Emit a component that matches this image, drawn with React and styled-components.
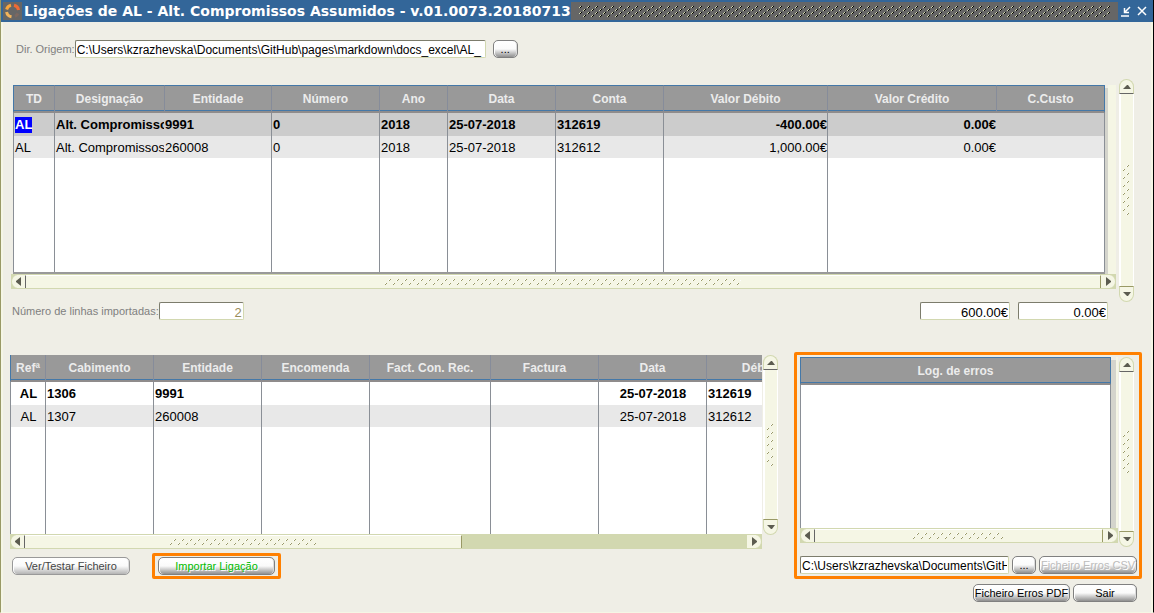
import React from "react";
import styled, { createGlobalStyle, css } from "styled-components";

const color = {
  page: "#efeee6",
  cream: "#f5f6e5",
  olive: "#d2d8b0",
  oliveDark: "#999966",
  title: "#336699",
  header: "#999999",
  line: "#8a8f96",
  blue: "#4478a8",
  orange: "#ff8000",
};

const Global = createGlobalStyle`
  * { box-sizing: border-box; }
  body {
    margin: 0;
    background: ${color.page};
    font-family: "Liberation Sans", Arial, sans-serif;
    font-size: 13px;
    color: #000;
  }
  button, input { font-family: inherit; margin: 0; }
`;

const Window = styled.div`
  display: flex;
  flex-direction: column;
  min-height: 100vh;
  border-left: 1px solid ${color.oliveDark};
  border-right: 1px solid #000;
  border-bottom: 1px solid ${color.cream};
  background: ${color.page};
`;

const TitleBar = styled.header`
  display: flex;
  align-items: center;
  height: 22px;
  padding: 0 3px 0 2px;
  background: ${color.title};
`;

const Title = styled.h1`
  margin: 0 0 0 2px;
  font: bold 14px/20px "DejaVu Sans", Verdana, sans-serif;
  color: #fff;
  white-space: nowrap;
`;

const TitleGrip = styled.div`
  flex: 1;
  height: 18px;
  padding: 4px 8px;
  background: #666;
  svg { display: block; }
`;

const TitleButton = styled.button`
  width: 16px;
  height: 18px;
  padding: 0;
  border: 0;
  background: transparent;
  svg { display: block; margin: 0 auto; }
`;

const Main = styled.main`
  flex: 1;
  border-left: 2px solid ${color.cream};
  border-right: 2px solid ${color.cream};
  padding: 18px 9px 8px 7px;
`;

const Label = styled.label`
  font-size: 11px;
  line-height: 14px;
  color: #808080;
  white-space: nowrap;
`;

const Field = styled.input`
  width: ${(p) => p.$w}px;
  flex: ${(p) => (p.$grow ? "1" : "none")};
  min-width: 0;
  height: 18px;
  padding: 2px 1px 0;
  border: 1px solid;
  border-color: #7c7c6c ${color.olive} ${color.olive} #7c7c6c;
  border-radius: 2px;
  background: #fff;
  font-size: ${(p) => (p.$path ? 12 : 13)}px;
  color: ${(p) => (p.$muted ? "#998c59" : "#000")};
  text-align: ${(p) => (p.$right ? "right" : "left")};
  outline: 0;
`;

const PushButton = styled.button`
  width: ${(p) => p.$w}px;
  flex: none;
  height: 18px;
  padding: 0;
  border: 1px solid #808080;
  border-radius: 5px;
  background: linear-gradient(#fff 0, #fafafa 50%, #cfcfcf 70%, #8f8f8f 100%);
  box-shadow: inset 1px 0 #fff, inset -1px 0 #ddd;
  font-size: 11px;
  line-height: 16px;
  white-space: nowrap;
  color: ${(p) => p.$color || "#000"};
  ${(p) =>
    p.$soft &&
    css`
      border-color: #999;
      background: linear-gradient(#fff 0, #fafafa 50%, #dedede 70%, #b4b4b4 100%);
    `}
  ${(p) =>
    p.$shade &&
    css`
      text-shadow: 1px 1px #fff;
    `}
`;

const SourceRow = styled.div`
  display: flex;
  align-items: center;
  margin-left: 6px;
  ${Field} { margin-right: 7px; }
`;

const Section = styled.section`
  display: flex;
  margin: 21px 0 0 1px;
  padding-right: 8px;
`;

const GridBlock = styled.div`
  flex: 1;
  min-width: 0;
  padding: ${(p) => p.$pad || 0};
`;

const GridFrame = styled.div`
  display: flex;
  overflow: hidden;
  padding-left: ${(p) => p.$inset || 0}px;
`;

const Shade = styled.div`
  width: ${(p) => p.$w}px;
  flex: none;
  margin-top: 3px;
  background: #d4d4cc;
`;

const Gutter = styled.div`
  width: ${(p) => p.$w}px;
  flex: none;
  background: ${color.cream};
`;

const Table = styled.table`
  width: 100%;
  min-width: ${(p) => p.$min || 0}px;
  table-layout: fixed;
  border-collapse: separate;
  border-spacing: 0;
  background: #fff;
  border-bottom: ${(p) => (p.$foot ? `2px solid ${color.header}` : "0")};
`;

const Th = styled.th`
  height: ${(p) => p.$h || 28}px;
  padding: 0;
  overflow: hidden;
  border-left: 1px solid #868c9a;
  border-top: ${(p) => (p.$open ? "0" : `1px solid ${color.blue}`)};
  border-bottom: 2px solid #8f8c8c;
  background: ${color.header};
  box-shadow: inset 0 -1px ${color.blue};
  font-size: 12px;
  line-height: 14px;
  color: #ececec;
  white-space: nowrap;
  &:first-child { border-left-color: ${color.blue}; }
  &:last-child { border-right: 1px solid ${color.blue}; }
`;

const Row = styled.tr`
  background: ${(p) => p.$bg};
  font-weight: ${(p) => (p.$bold ? "bold" : "normal")};
`;

const Td = styled.td`
  height: ${(p) => p.$h}px;
  padding: ${(p) => (p.$low ? 2 : 0)}px 0 0 ${(p) => (p.$align === "right" ? 0 : 1)}px;
  overflow: hidden;
  border-left: ${(p) => (p.$open ? "0" : `1px solid ${color.line}`)};
  line-height: 16px;
  white-space: nowrap;
  text-align: ${(p) => p.$align || "left"};
  &:last-child { border-right: 1px solid ${color.line}; }
`;

const Marked = styled.span`
  display: inline-block;
  background: #0000ff;
  color: #fff;
`;

const HBar = styled.div`
  display: flex;
  height: 15px;
  border: solid ${color.olive};
  border-width: 1px 0;
  background: ${color.olive};
`;

const VBar = styled.div`
  display: flex;
  flex-direction: column;
  flex: none;
  width: 15px;
  margin-left: ${(p) => p.$gap}px;
`;

const HThumb = styled.div`
  display: flex;
  align-items: center;
  justify-content: center;
  flex: ${(p) => (p.$size ? `0 0 ${p.$size}` : "1")};
  background: ${color.cream};
  border-top: 1px solid #fff;
  border-left: 1px solid #666;
  border-right: 1px solid ${color.oliveDark};
`;

const VThumb = styled.div`
  display: flex;
  align-items: center;
  justify-content: center;
  flex: 1;
  background: ${color.cream};
  border: solid #fff;
  border-width: 0 1px 0 2px;
`;

const ScrollButton = styled.button`
  flex: none;
  display: flex;
  align-items: center;
  justify-content: center;
  padding: 0;
  background: ${color.cream};
  border: 1px solid ${color.olive};
  ${(p) => p.$dir === "left" && css`width: 14px; border-width: 0 0 0 1px; border-radius: 7px 0 0 7px;`}
  ${(p) => p.$dir === "right" && css`width: 15px; border-width: 0 1px 0 0; border-radius: 0 7px 7px 0;`}
  ${(p) => p.$dir === "up" && css`height: 15px; border-radius: 8px 8px 0 0; border-bottom-color: #666;`}
  ${(p) => p.$dir === "down" && css`height: 16px; border-radius: 0 0 8px 8px; border-top-color: ${color.oliveDark};`}
`;

const Track = styled.div`
  flex: 1;
`;

const arrows = {
  left: "M5 0v9L0 5V4z",
  right: "M0 0v9l5-4V4z",
  up: "M0 5h8L5 1H4z",
  down: "M0 1h8L5 5H4z",
};

function Arrow({ dir }) {
  const tall = dir === "left" || dir === "right";
  return (
    <svg width={tall ? 5 : 8} height={tall ? 9 : 6} aria-hidden="true">
      <path d={arrows[dir]} fill="#5c5c50" />
    </svg>
  );
}

function Grip({ id, w, h }) {
  return (
    <svg width={w} height={h} shapeRendering="crispEdges" aria-hidden="true">
      <defs>
        <pattern id={id} width="8" height="8" patternUnits="userSpaceOnUse">
          <path d="M5 0h1v1h-1zM4 1h1v1h-1zM1 4h1v1h-1zM0 5h1v1h-1z" fill="#999966" />
          <path d="M4 0h1v1h-1zM3 1h1v1h-1zM0 4h1v1h-1z" fill="#fff" />
        </pattern>
      </defs>
      <rect width={w} height={h} fill={`url(#${id})`} />
    </svg>
  );
}

function HScroll({ id, grip, size }) {
  return (
    <HBar>
      <ScrollButton $dir="left" type="button" aria-label="Esquerda"><Arrow dir="left" /></ScrollButton>
      <HThumb $size={size}><Grip id={id} w={grip} h={6} /></HThumb>
      {size && <Track />}
      <ScrollButton $dir="right" type="button" aria-label="Direita"><Arrow dir="right" /></ScrollButton>
    </HBar>
  );
}

function VScroll({ id, grip, gap }) {
  return (
    <VBar $gap={gap}>
      <ScrollButton $dir="up" type="button" aria-label="Acima"><Arrow dir="up" /></ScrollButton>
      <VThumb><Grip id={id} w={8} h={grip} /></VThumb>
      <ScrollButton $dir="down" type="button" aria-label="Abaixo"><Arrow dir="down" /></ScrollButton>
    </VBar>
  );
}

const TotalsRow = styled.div`
  display: flex;
  align-items: center;
  padding: 0 34px 0 2px;
`;

const Totals = styled.div`
  display: flex;
  gap: 8px;
  margin-left: auto;
`;

const Lower = styled.div`
  display: flex;
  align-items: flex-start;
  gap: 16px;
  margin-top: 32px;
`;

const Links = styled.section`
  flex: 1;
  min-width: 0;
  padding-top: 3px;
`;

const LinksGrid = styled.div`
  display: flex;
  align-items: flex-start;
  ${VBar} { height: 180px; }
`;

const Actions = styled.div`
  display: flex;
  align-items: center;
  gap: 22px;
  margin: 4px 0 0 2px;
`;

const Highlight = styled.div`
  display: flex;
  padding: 1px 3px;
  border: 3px solid ${color.orange};
  border-radius: 2px;
`;

const LogPanel = styled.section`
  flex: none;
  width: 348px;
  padding: 2px 2px 2px 3px;
  border: 3px solid ${color.orange};
  border-radius: 2px;
`;

const LogGrid = styled.div`
  display: flex;
  align-items: flex-start;
  padding-right: 3px;
  ${VBar} { height: 190px; }
`;

const LogFile = styled.div`
  display: flex;
  gap: 3px;
  margin-top: 9px;
`;

const Footer = styled.footer`
  display: flex;
  justify-content: flex-end;
  gap: 3px;
  margin: 5px 5px 0 0;
`;

const mainCols = [
  ["TD", 41],
  ["Designação", 110],
  ["Entidade", 107, "left", true],
  ["Número", 108],
  ["Ano", 68],
  ["Data", 108],
  ["Conta", 108],
  ["Valor Débito", 164, "right"],
  ["Valor Crédito", 169, "right"],
  ["C.Custo", 109, "left", true],
];

const mainRows = [
  ["AL", "Alt. Compromissos Assumidos", "9991", "0", "2018", "25-07-2018", "312619", "-400.00€", "0.00€", ""],
  ["AL", "Alt. Compromissos Assumidos", "260008", "0", "2018", "25-07-2018", "312612", "1,000.00€", "0.00€", ""],
];

const linkCols = [
  ["Refª", 35, "center"],
  ["Cabimento", 108],
  ["Entidade", 108],
  ["Encomenda", 108],
  ["Fact. Con. Rec.", 121],
  ["Factura", 108],
  ["Data", 108, "center"],
  ["Débito", 109],
];

const linkRows = [
  ["AL", "1306", "9991", "", "", "", "25-07-2018", "312619"],
  ["AL", "1307", "260008", "", "", "", "25-07-2018", "312612"],
];

function DataTable({ cols, rows, firstBg, mark, rest, min, foot, openTop, headH }) {
  return (
    <Table $min={min} $foot={foot}>
      <colgroup>
        {cols.map(([name, w]) => <col key={name} style={w ? { width: w } : undefined} />)}
      </colgroup>
      <thead>
        <tr>{cols.map(([name]) => <Th key={name} scope="col" $open={openTop} $h={headH}>{name}</Th>)}</tr>
      </thead>
      <tbody>
        {rows.map((row, r) => (
          <Row key={r} $bold={r === 0} $bg={r === 0 ? firstBg : "#e8e8e8"}>
            {row.map((text, c) => (
              <Td key={c} $h={r === 0 ? 23 : 22} $low={r > 0} $align={cols[c][2]} $open={cols[c][3]}>
                {mark && r === 0 && c === 0 ? <Marked>{text}</Marked> : text}
              </Td>
            ))}
          </Row>
        ))}
        <Row>
          {cols.map(([name, , , open]) => <Td key={name} $h={rest} $open={open} />)}
        </Row>
      </tbody>
    </Table>
  );
}

function Logo() {
  return (
    <svg width="19" height="18" viewBox="0 0 19 18" aria-hidden="true">
      <rect width="19" height="18" fill="#666" />
      <g fill="none" strokeWidth="3">
        <path d="M8 3.3A6 6 0 0 0 3.6 7.5" stroke="#f7a63c" />
        <path d="M11 3.3A6 6 0 0 1 15.6 8" stroke="#ef6a35" />
        <path d="M3.6 10A6 6 0 0 0 8.5 14.8" stroke="#f2b45c" />
        <path d="M15 11.5A6 6 0 0 1 12 14.3" stroke="#7c6860" />
      </g>
    </svg>
  );
}

export default function App() {
  return (
    <Window>
      <Global />
      <TitleBar>
        <Logo />
        <Title>Ligações de AL - Alt. Compromissos Assumidos - v.01.0073.20180713</Title>
        <TitleGrip>
          <svg width="100%" height="11" shapeRendering="crispEdges" aria-hidden="true">
            <defs>
              <pattern id="title-grip" width="8" height="6" patternUnits="userSpaceOnUse">
                <path d="M1 1h1v1h-1zM2 0h1v1h-1zM5 4h1v1h-1zM6 3h1v1h-1z" fill="#000" />
                <path d="M1 0h1v1h-1zM0 1h1v1h-1zM5 3h1v1h-1zM4 4h1v1h-1z" fill="#d2d8b0" />
              </pattern>
            </defs>
            <rect width="100%" height="11" fill="url(#title-grip)" />
          </svg>
        </TitleGrip>
        <TitleButton type="button" aria-label="Minimizar">
          <svg width="10" height="11">
            <path d="M9 1L4 6M3.5 2v4.500H8M0 10h8" fill="none" stroke="#fff" strokeWidth="1.500" />
          </svg>
        </TitleButton>
        <TitleButton type="button" aria-label="Fechar">
          <svg width="10" height="10">
            <path d="M1 1l8 8M9 1L1 9" fill="none" stroke="#fff" strokeWidth="1.500" />
          </svg>
        </TitleButton>
      </TitleBar>

      <Main>
        <SourceRow>
          <Label htmlFor="origem">Dir. Origem:</Label>
          <Field id="origem" $w={411} $path defaultValue="C:\Users\kzrazhevska\Documents\GitHub\pages\markdown\docs_excel\AL_" />
          <PushButton type="button" $w={25}>...</PushButton>
        </SourceRow>

        <Section>
          <GridBlock $pad="6px 0 13px">
            <GridFrame $inset={2}>
              <DataTable cols={mainCols} rows={mainRows} firstBg="#cccccc" mark foot rest={114} />
              <Shade $w={3} />
              <Gutter $w={8} />
            </GridFrame>
            <HScroll id="grip-main-h" grip={356} />
          </GridBlock>
          <VScroll id="grip-main-v" grip={50} gap={3} />
        </Section>

        <TotalsRow>
          <Label htmlFor="linhas">Número de linhas importadas:</Label>
          <Field id="linhas" $w={85} $right $muted defaultValue="2" />
          <Totals>
            <Field aria-label="Total débito" $w={90} $right defaultValue="600.00€" />
            <Field aria-label="Total crédito" $w={90} $right defaultValue="0.00€" />
          </Totals>
        </TotalsRow>

        <Lower>
          <Links>
            <LinksGrid>
              <GridBlock>
                <GridFrame>
                  <DataTable cols={linkCols} rows={linkRows} firstBg="#ffffff" min={805} openTop headH={27} rest={107} />
                </GridFrame>
                <HScroll id="grip-link-h" grip={147} size="438px" />
              </GridBlock>
              <VScroll id="grip-link-v" grip={42} gap={1} />
            </LinksGrid>
            <Actions>
              <PushButton type="button" $w={118} $soft $color="#444">Ver/Testar Ficheiro</PushButton>
              <Highlight>
                <PushButton type="button" $w={117} $shade $color="#00bb00">Importar Ligação</PushButton>
              </Highlight>
            </Actions>
          </Links>

          <LogPanel>
            <LogGrid>
              <GridBlock>
                <GridFrame>
                  <DataTable cols={[["Log. de erros"]]} rows={[]} rest={143} />
                  <Shade $w={5} />
                  <Gutter $w={2} />
                </GridFrame>
                <HScroll id="grip-log-h" grip={91} />
              </GridBlock>
              <VScroll id="grip-log-v" grip={42} gap={1} />
            </LogGrid>
            <LogFile>
              <Field aria-label="Ficheiro de erros" $grow $path defaultValue="C:\Users\kzrazhevska\Documents\GitHub\pages" />
              <PushButton type="button" $w={24}>...</PushButton>
              <PushButton type="button" $w={98} $shade $color="#bbb">Ficheiro Erros CSV</PushButton>
            </LogFile>
          </LogPanel>
        </Lower>

        <Footer>
          <PushButton type="button" $w={97}>Ficheiro Erros PDF</PushButton>
          <PushButton type="button" $w={64}>Sair</PushButton>
        </Footer>
      </Main>
    </Window>
  );
}
